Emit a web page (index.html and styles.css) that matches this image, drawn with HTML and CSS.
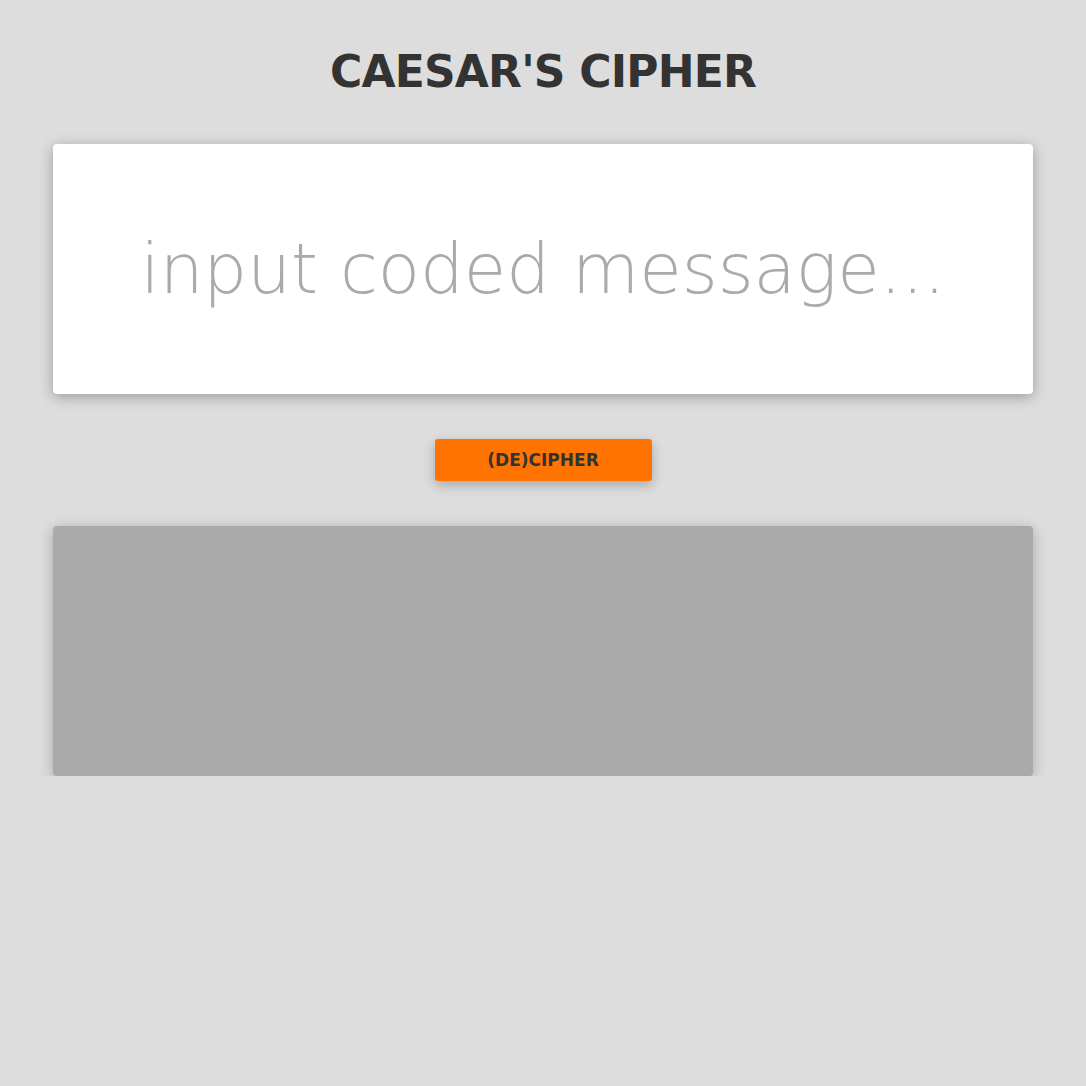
FILE: index.html
```html
<!DOCTYPE html>
<html lang="en">
<head>
<meta charset="utf-8">
<title>Caesar's Cipher</title>
<link rel="stylesheet" href="styles.css">
</head>
<body>
<main class="app">
  <h1 class="title">CAESAR'S CIPHER</h1>
  <textarea class="input" placeholder="input coded message..."></textarea>
  <button class="btn" type="button">(DE)CIPHER</button>
  <div class="output"></div>
</main>
</body>
</html>
```
FILE: styles.css
```css
html, body {
  margin: 0;
  padding: 0;
  background: #dddddd;
}
body {
  font-family: "DejaVu Sans", "Noto Sans", sans-serif;
  color: #333333;
}
.app {
  width: 980px;
  margin: 0 auto;
  display: flex;
  flex-direction: column;
  align-items: center;
  padding-top: 40px;
}
.title {
  margin: 0 0 40px;
  font-size: 44px;
  line-height: 64px;
  font-weight: 700;
  color: #333333;
  letter-spacing: -0.8px;
}
.input {
  box-sizing: border-box;
  width: 980px;
  height: 250px;
  border: none;
  border-radius: 4px;
  background: #ffffff;
  box-shadow: 0 3px 14px rgba(0, 0, 0, 0.3);
  resize: none;
  outline: none;
  padding: 75px 20px 0;
  font-family: "DejaVu Sans", "Noto Sans", sans-serif;
  font-weight: 300;
  font-size: 69px;
  line-height: 100px;
  text-align: center;
  color: #333333;
}
.input::placeholder {
  color: #aaaaaa;
  opacity: 1;
}
.btn {
  margin-top: 45px;
  width: 217px;
  height: 42px;
  border: none;
  border-radius: 3px;
  background: #ff7300;
  color: #333333;
  font-family: "DejaVu Sans", "Noto Sans", sans-serif;
  font-weight: 700;
  font-size: 17px;
  box-shadow: 0 4px 12px rgba(0, 0, 0, 0.25);
  cursor: pointer;
}
.output {
  margin-top: 45px;
  width: 980px;
  height: 250px;
  border-radius: 4px;
  background: #aaaaaa;
  box-shadow: 0 3px 14px rgba(0, 0, 0, 0.25);
}
```
